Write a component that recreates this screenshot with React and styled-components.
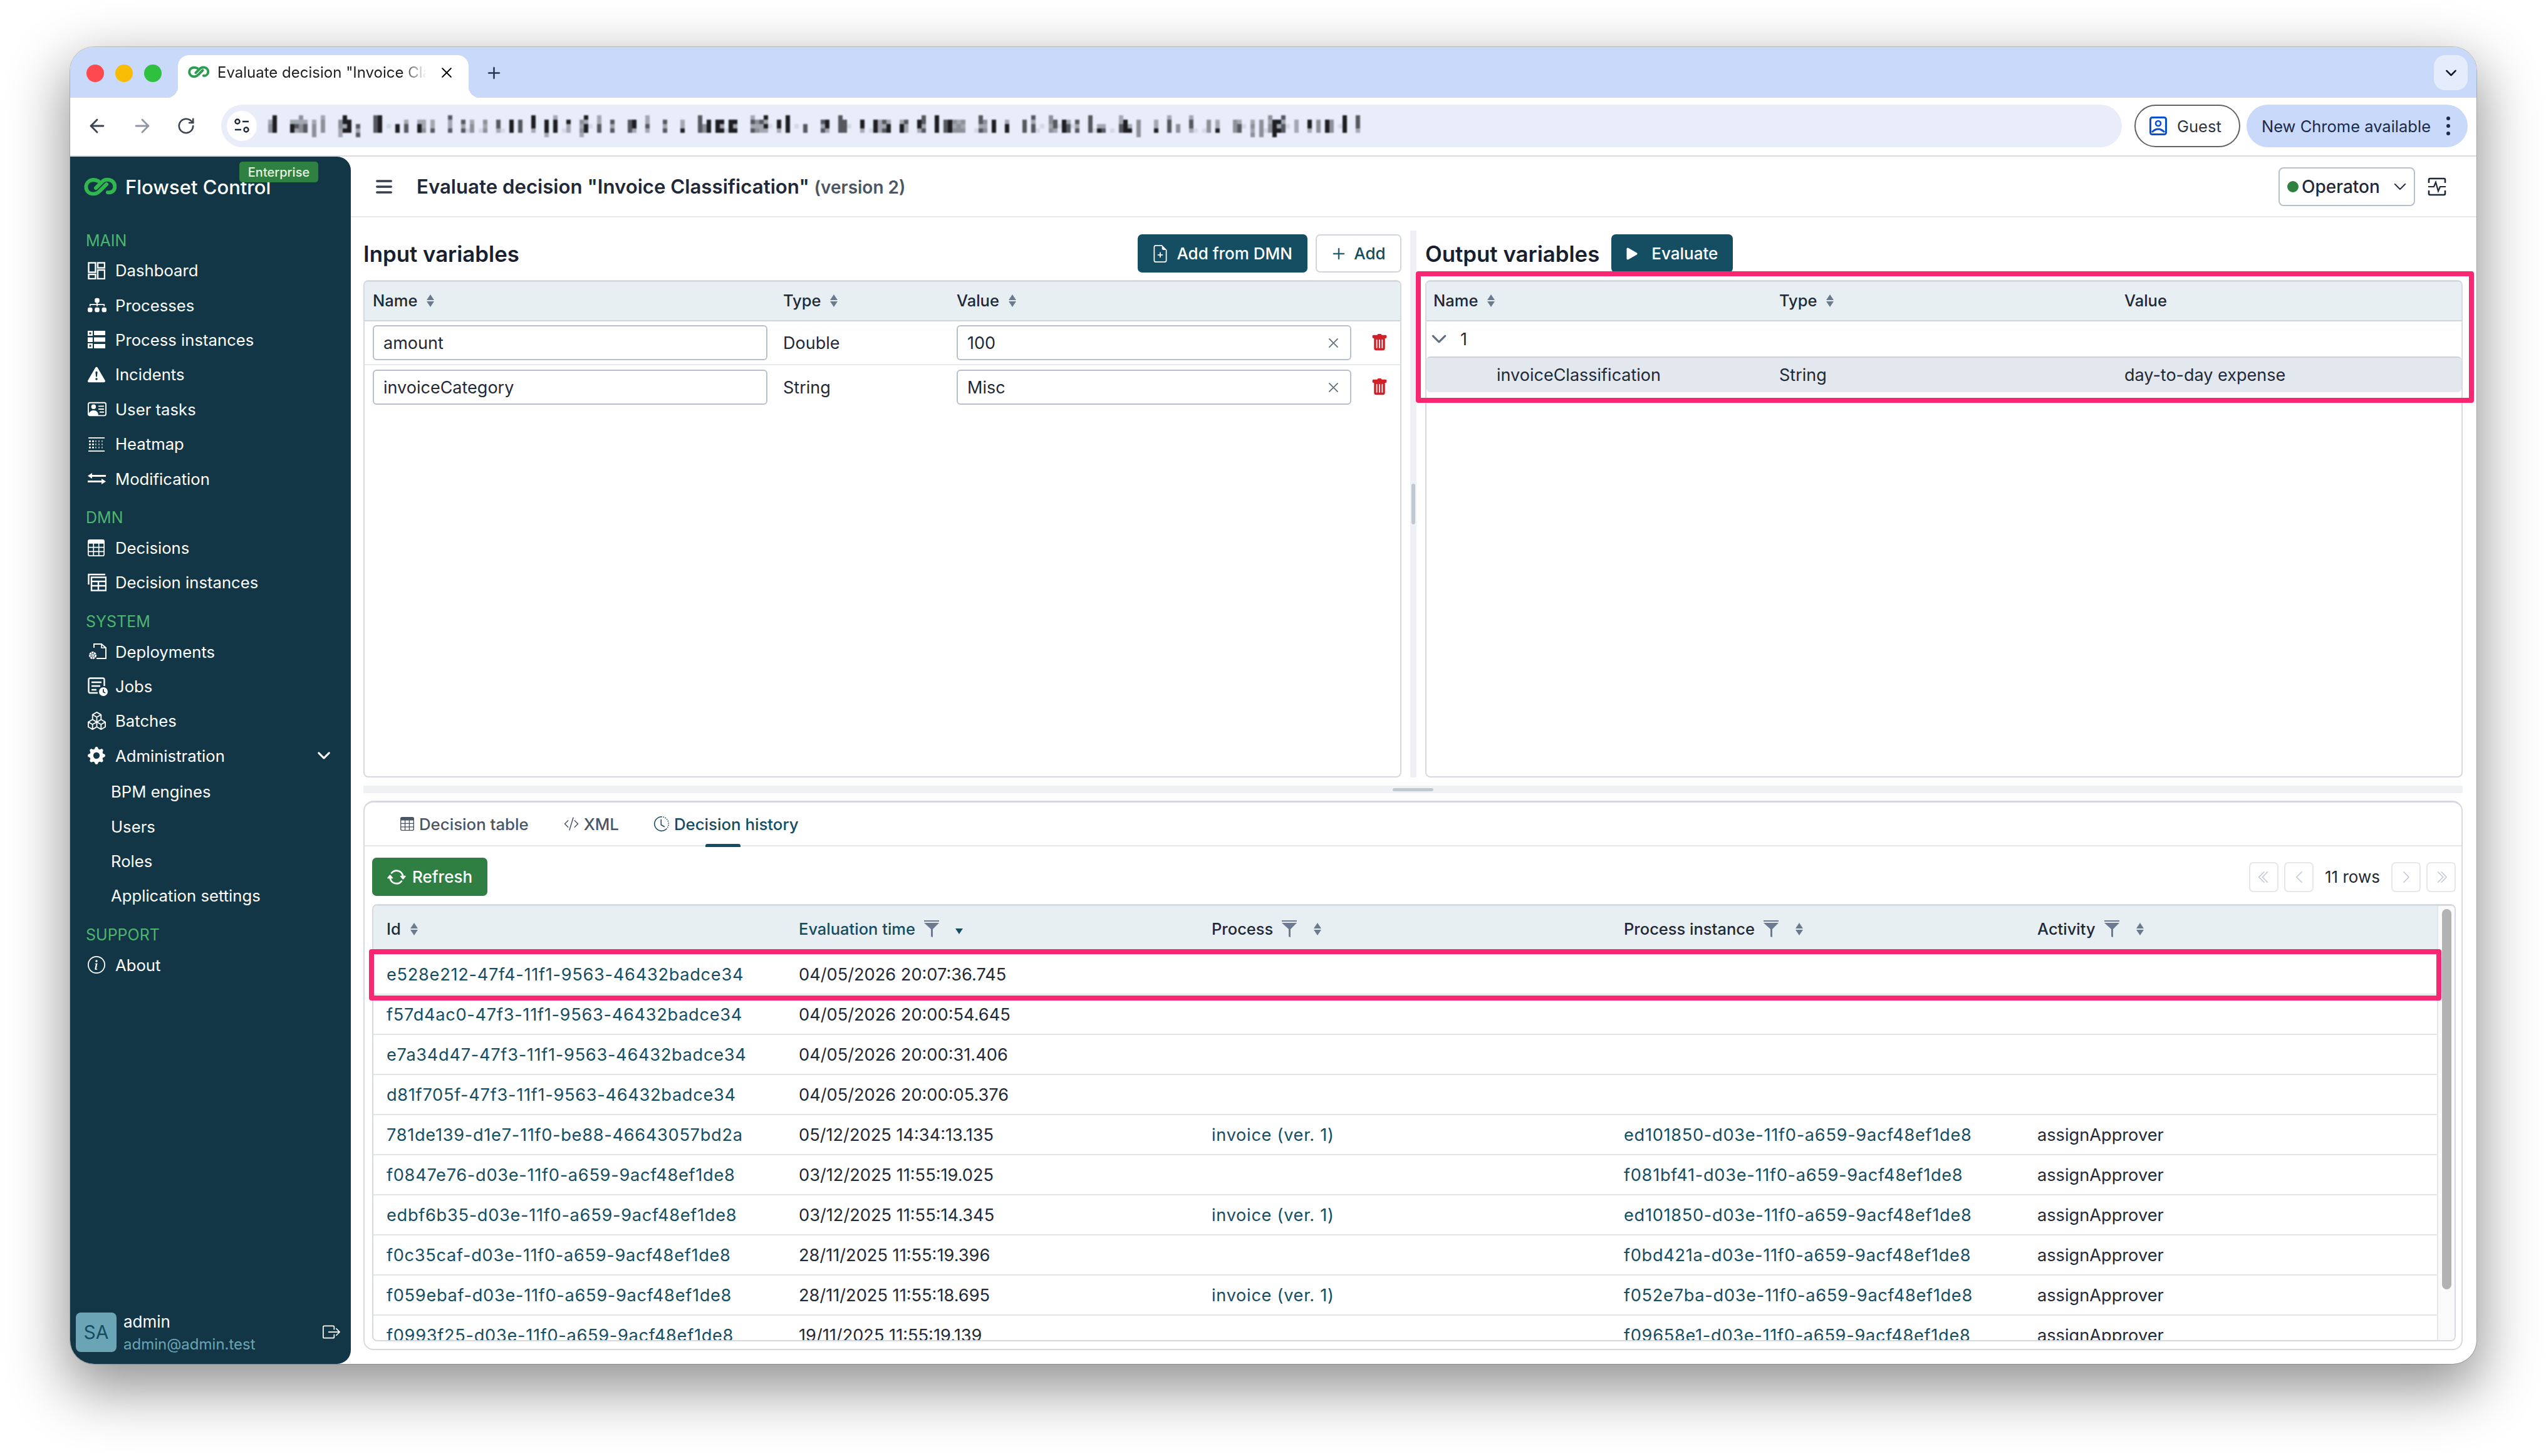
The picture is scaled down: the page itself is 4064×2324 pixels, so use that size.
import React, { useMemo } from 'react';
import styled, { createGlobalStyle } from 'styled-components';
import { ArrowLeft, ArrowRight, RotateCw } from 'lucide-react';
import {
  BsArrowRepeat,
  BsBoxArrowRight,
  BsBoxes,
  BsChevronDoubleLeft,
  BsChevronDoubleRight,
  BsChevronDown,
  BsChevronLeft,
  BsChevronRight,
  BsClockHistory,
  BsCodeSlash,
  BsDiagram3Fill,
  BsExclamationTriangleFill,
  BsFileEarmarkPlus,
  BsGearFill,
  BsInfoCircle,
  BsList,
  BsPersonVcard,
  BsPlayFill,
  BsPlusLg,
  BsTable,
  BsTrashFill,
  BsXLg,
} from 'react-icons/bs';

const GlobalStyle = createGlobalStyle`
  * { box-sizing: border-box; }
  html, body { margin: 0; padding: 0; background: #fff; }
  body { font-family: Inter, "Liberation Sans", sans-serif; color: #1f2937; }
`;

const TEAL = '#154d63';

const Logo = ({ size = 52, color = '#30b84f' }) => (
  <svg width={size} height={size * 0.6} viewBox="0 0 52 31" fill="none" stroke={color} strokeWidth="6" strokeLinecap="round">
    <path d="M23 6C19 4 14 3.500 10 5C4 8 2.500 14 4 19C6 25 12 27 18 26C22 25.500 24 23 26 21L36 11" />
    <path d="M19 17L28 8C31 4.500 36 3 41 4C47 5.500 50 11 49 17C48 22 43 25 38 24" />
  </svg>
);

const SortIcon = ({ color = '#6b7a8f' }) => (
  <svg width="14" height="20" viewBox="0 0 14 20" fill={color}>
    <path d="M7 0L13 9H1Z" />
    <path d="M7 20L13 11H1Z" />
  </svg>
);

const FilterIcon = () => (
  <svg width="24" height="27" viewBox="0 0 24 27" fill="#6b7a8f">
    <rect x="0" y="0" width="24" height="2" />
    <path d="M0 4H24L14 14V27L11 26V14Z" />
  </svg>
);

const DashboardIcon = () => (
  <svg width="28" height="28" viewBox="0 0 28 28" fill="none" stroke="#fff" strokeWidth="2.400">
    <rect x="1.500" y="1.500" width="11" height="15" />
    <rect x="16" y="1.500" width="11" height="8" />
    <rect x="1.500" y="20" width="11" height="7" />
    <rect x="16" y="13" width="11" height="14" />
  </svg>
);

const InstancesIcon = () => (
  <svg width="28" height="28" viewBox="0 0 28 28" fill="#fff">
    <path fillRule="evenodd" d="M0 0H8V8H0ZM2.500 2.500V5.500H5.500V2.500Z" />
    <rect x="10" y="0" width="18" height="7" />
    <path d="M0 10.500H8V18H0Z" />
    <rect x="10" y="10.500" width="18" height="7" />
    <path fillRule="evenodd" d="M0 20H8V28H0ZM2.500 22.500V25.500H5.500V22.500Z" />
    <rect x="10" y="21" width="18" height="7" />
  </svg>
);

const HeatmapIcon = () => {
  const dots = [];
  for (let row = 0; row < 3; row++) {
    for (let col = 0; col < 5; col++) {
      dots.push(<rect key={`${row}${col}`} x={2 + col * 5} y={8 + row * 5} width={col < 2 ? 3 : 2} height="2.600" opacity={col < 2 ? 1 : 0.6} />);
    }
  }
  return (
    <svg width="28" height="28" viewBox="0 0 28 28" fill="#fff">
      <rect x="1" y="3" width="26" height="1.800" />
      {dots}
      <rect x="1" y="24" width="26" height="1.800" />
    </svg>
  );
};

const ModificationIcon = () => (
  <svg width="29" height="24" viewBox="0 0 29 24" fill="#fff">
    <rect x="5" y="6" width="24" height="3" />
    <path d="M0 7.500L7 3V12Z" />
    <rect x="0" y="15" width="24" height="3" />
    <path d="M29 16.500L22 12V21Z" />
  </svg>
);

const DecisionInstancesIcon = () => (
  <svg width="30" height="30" viewBox="0 0 30 30" fill="none" stroke="#fff" strokeWidth="2.400">
    <path d="M1.500 18V2H28" />
    <rect x="6" y="6.500" width="23" height="21" />
    <path d="M6 13H29M6 20H29M17 13V27" />
  </svg>
);

const DeploymentsIcon = () => (
  <svg width="30" height="28" viewBox="0 0 30 28" fill="none" stroke="#fff" strokeWidth="2">
    <path d="M10 8V2H22L29 8V25H14" />
    <path d="M22 2V8H29" strokeWidth="1.600" />
    <circle cx="8" cy="20" r="4.500" strokeWidth="3" strokeDasharray="3 0.800" />
    <circle cx="8" cy="20" r="1.500" strokeWidth="1.500" />
  </svg>
);

const JobsIcon = () => (
  <svg width="32" height="30" viewBox="0 0 32 30" fill="none" stroke="#fff" strokeWidth="2.400">
    <path d="M16 25H4Q1.500 25 1.500 22V4Q1.500 1.500 4 1.500H24Q26.500 1.500 26.500 4V14" />
    <path d="M6 8H22M6 14H20M6 20H14" />
    <circle cx="25" cy="23" r="7" fill="#fff" stroke="none" />
    <path d="M25 19V23.500L28 25" stroke="#123645" strokeWidth="1.800" />
  </svg>
);

const SiteIcon = () => (
  <svg width="26" height="26" viewBox="0 0 26 26" fill="none" stroke="#1f2937" strokeWidth="2.400">
    <circle cx="6" cy="6" r="3.500" />
    <path d="M14 6H24M2 19H12" />
    <circle cx="20" cy="19" r="3.500" />
  </svg>
);

const GuestIcon = () => (
  <svg width="28" height="30" viewBox="0 0 28 30" fill="none">
    <rect x="1.500" y="1.500" width="25" height="27" rx="3" stroke="#0b50d0" strokeWidth="3" />
    <circle cx="14" cy="11" r="4" stroke="#0b50d0" strokeWidth="2.600" />
    <path d="M4 25Q14 15 24 25" stroke="#0b50d0" strokeWidth="3" />
  </svg>
);

const PulseBoxIcon = () => (
  <svg width="30" height="30" viewBox="0 0 30 30" fill="none" stroke="#1f2937" strokeWidth="2.600">
    <path d="M2 9V4Q2 2 4 2H26Q28 2 28 4V9" />
    <path d="M2 21V26Q2 28 4 28H26Q28 28 28 26V21" />
    <path d="M1 15H10L13 8L17 22L20 15H29" strokeWidth="2.200" />
  </svg>
);

// mosaic standing in for the pixelated address in the screenshot
const BlurredUrl = () => {
  const cells = useMemo(() => {
    const out = [];
    let seed = 4211;
    const rnd = () => {
      seed = (seed * 1103515245 + 12345) & 0x7fffffff;
      return seed / 0x7fffffff;
    };
    const cols = 249;
    let gap = 0;
    for (let c = 0; c < cols; c++) {
      if (gap > 0) {
        gap--;
        if (rnd() < 0.2) out.push({ x: c * 7, y: 14 + Math.floor(rnd() * 2) * 7, f: '#d3d9e6' });
        continue;
      }
      const kind = rnd();
      const top = kind < 0.25 ? 0 : 1;
      const bottom = kind > 0.93 ? 4 : 3;
      const shade = rnd();
      const base = shade < 0.45 ? '#1d1e22' : shade < 0.75 ? '#55585f' : '#8d9098';
      for (let r = top; r <= bottom; r++) {
        if (r === 1 && top === 1 && rnd() < 0.15) continue;
        out.push({ x: c * 7, y: r * 7, f: rnd() < 0.25 ? '#a3a7b2' : base });
      }
      if (rnd() < 0.6) gap = 1 + Math.floor(rnd() * 3);
    }
    return out;
  }, []);
  return (
    <svg width="1744" height="35" viewBox="0 0 1744 35" style={{ filter: 'blur(0.8px)' }}>
      {cells.map((k, i) => (
        <rect key={i} x={k.x} y={k.y} width="7" height="7" fill={k.f} />
      ))}
    </svg>
  );
};

const NAV = [
  {
    title: 'MAIN',
    items: [
      ['Dashboard', <DashboardIcon />],
      ['Processes', <BsDiagram3Fill size={30} />],
      ['Process instances', <InstancesIcon />],
      ['Incidents', <BsExclamationTriangleFill size={28} />],
      ['User tasks', <BsPersonVcard size={30} />],
      ['Heatmap', <HeatmapIcon />],
      ['Modification', <ModificationIcon />],
    ],
  },
  {
    title: 'DMN',
    items: [
      ['Decisions', <BsTable size={27} />],
      ['Decision instances', <DecisionInstancesIcon />],
    ],
  },
  {
    title: 'SYSTEM',
    items: [
      ['Deployments', <DeploymentsIcon />],
      ['Jobs', <JobsIcon />],
      ['Batches', <BsBoxes size={29} />],
    ],
  },
];

const ADMIN = ['BPM engines', 'Users', 'Roles', 'Application settings'];

const HISTORY = [
  ['e528e212-47f4-11f1-9563-46432badce34', '04/05/2026 20:07:36.745', '', '', ''],
  ['f57d4ac0-47f3-11f1-9563-46432badce34', '04/05/2026 20:00:54.645', '', '', ''],
  ['e7a34d47-47f3-11f1-9563-46432badce34', '04/05/2026 20:00:31.406', '', '', ''],
  ['d81f705f-47f3-11f1-9563-46432badce34', '04/05/2026 20:00:05.376', '', '', ''],
  ['781de139-d1e7-11f0-be88-46643057bd2a', '05/12/2025 14:34:13.135', 'invoice (ver. 1)', 'ed101850-d03e-11f0-a659-9acf48ef1de8', 'assignApprover'],
  ['f0847e76-d03e-11f0-a659-9acf48ef1de8', '03/12/2025 11:55:19.025', '', 'f081bf41-d03e-11f0-a659-9acf48ef1de8', 'assignApprover'],
  ['edbf6b35-d03e-11f0-a659-9acf48ef1de8', '03/12/2025 11:55:14.345', 'invoice (ver. 1)', 'ed101850-d03e-11f0-a659-9acf48ef1de8', 'assignApprover'],
  ['f0c35caf-d03e-11f0-a659-9acf48ef1de8', '28/11/2025 11:55:19.396', '', 'f0bd421a-d03e-11f0-a659-9acf48ef1de8', 'assignApprover'],
  ['f059ebaf-d03e-11f0-a659-9acf48ef1de8', '28/11/2025 11:55:18.695', 'invoice (ver. 1)', 'f052e7ba-d03e-11f0-a659-9acf48ef1de8', 'assignApprover'],
  ['f0993f25-d03e-11f0-a659-9acf48ef1de8', '19/11/2025 11:55:19.139', '', 'f09658e1-d03e-11f0-a659-9acf48ef1de8', 'assignApprover'],
];

const VariableRow = ({ name, type, value, last }) => (
  <InputRow $last={last}>
    <TextBox>{name}</TextBox>
    <span>{type}</span>
    <ValueCell>
      <ValueBox>
        {value}
        <BsXLg size={19} color="#5b6675" stroke="#5b6675" strokeWidth={0.5} />
      </ValueBox>
      <BsTrashFill size={28} color="#d0202a" />
    </ValueCell>
  </InputRow>
);

const App = () => (
  <Page>
    <GlobalStyle />
    <Window>
      <TabStrip>
        <Lights>
          <Light $color="#fe4a4f" />
          <Light $color="#f8bc05" />
          <Light $color="#2dc13f" />
        </Lights>
        <Tab>
          <Logo size={34} color="#2a9d50" />
          <TabTitle>Evaluate decision "Invoice Classification"</TabTitle>
          <BsXLg size={20} color="#111" stroke="#111" strokeWidth={0.8} />
        </Tab>
        <NewTab>
          <BsPlusLg size={25} stroke="#1f2f4a" strokeWidth={0.5} />
        </NewTab>
        <TabSearch>
          <BsChevronDown size={19} stroke="#111827" strokeWidth={1.2} />
        </TabSearch>
      </TabStrip>

      <Toolbar>
        <NavButton><ArrowLeft size={34} strokeWidth={2} /></NavButton>
        <NavButton $off><ArrowRight size={34} strokeWidth={2} /></NavButton>
        <NavButton><RotateCw size={30} strokeWidth={2} /></NavButton>
        <Omnibox>
          <SiteButton><SiteIcon /></SiteButton>
          <BlurredUrl />
        </Omnibox>
        <GuestButton>
          <GuestIcon />
          Guest
        </GuestButton>
        <UpdateButton>
          New Chrome available
          <Kebab>
            <i /><i /><i />
          </Kebab>
        </UpdateButton>
      </Toolbar>

      <AppBody>
        <Sidebar>
          <Brand>
            <Logo />
            <BrandName>Flowset Control</BrandName>
            <EnterpriseBadge>Enterprise</EnterpriseBadge>
          </Brand>
          {NAV.map((section, index) => (
            <React.Fragment key={section.title}>
              <SectionLabel $first={index === 0}>{section.title}</SectionLabel>
              {section.items.map(([label, icon]) => (
                <NavItem key={label}>
                  <NavIcon>{icon}</NavIcon>
                  {label}
                </NavItem>
              ))}
            </React.Fragment>
          ))}
          <NavItem>
            <NavIcon><BsGearFill size={28} /></NavIcon>
            Administration
            <NavCaret><BsChevronDown size={22} stroke="#fff" strokeWidth={1.2} /></NavCaret>
          </NavItem>
          <SubNav>
            {ADMIN.map((label) => (
              <SubItem key={label}>{label}</SubItem>
            ))}
          </SubNav>
          <SectionLabel>SUPPORT</SectionLabel>
          <NavItem>
            <NavIcon><BsInfoCircle size={28} /></NavIcon>
            About
          </NavItem>
          <UserFooter>
            <Avatar>SA</Avatar>
            <UserText>
              <span>admin</span>
              <UserMail>admin@admin.test</UserMail>
            </UserText>
            <LogoutIcon><BsBoxArrowRight size={28} /></LogoutIcon>
          </UserFooter>
        </Sidebar>

        <Main>
          <Header>
            <BsList size={36} color="#374151" stroke="#374151" strokeWidth={0.5} />
            <PageTitle>
              Evaluate decision "Invoice Classification" <Version>(version 2)</Version>
            </PageTitle>
            <EngineSelect>
              <EngineDot />
              Operaton
              <EngineCaret><BsChevronDown size={22} stroke="#1f2937" strokeWidth={0.6} /></EngineCaret>
            </EngineSelect>
            <PulseBoxIcon />
          </Header>

          <Content>
            <TopPanes>
              <LeftPane>
                <PaneHead>
                  <PaneTitle>Input variables</PaneTitle>
                  <PaneActions>
                    <PrimaryButton>
                      <BsFileEarmarkPlus size={28} />
                      Add from DMN
                    </PrimaryButton>
                    <OutlineButton>
                      <BsPlusLg size={24} stroke={TEAL} strokeWidth={0.5} />
                      Add
                    </OutlineButton>
                  </PaneActions>
                </PaneHead>
                <DataPanel>
                  <InputHeadRow>
                    <HeadCell>Name <SortIcon /></HeadCell>
                    <HeadCell>Type <SortIcon /></HeadCell>
                    <HeadCell>Value <SortIcon /></HeadCell>
                  </InputHeadRow>
                  <VariableRow name="amount" type="Double" value="100" />
                  <VariableRow name="invoiceCategory" type="String" value="Misc" last />
                </DataPanel>
              </LeftPane>

              <VerticalSplit>
                <SplitGrip />
              </VerticalSplit>

              <RightPane>
                <PaneHead>
                  <PaneTitle>Output variables</PaneTitle>
                  <PrimaryButton $tight>
                    <BsPlayFill size={34} />
                    Evaluate
                  </PrimaryButton>
                </PaneHead>
                <OutputWrap>
                  <DataPanel>
                    <OutputHeadRow>
                      <HeadCell>Name <SortIcon /></HeadCell>
                      <HeadCell>Type <SortIcon /></HeadCell>
                      <HeadCell>Value</HeadCell>
                    </OutputHeadRow>
                    <GroupRow>
                      <BsChevronDown size={26} color="#5b6b80" stroke="#5b6b80" strokeWidth={0.8} />
                      <GroupIndex>1</GroupIndex>
                    </GroupRow>
                    <ResultRow>
                      <ResultName>invoiceClassification</ResultName>
                      <span>String</span>
                      <span>day-to-day expense</span>
                    </ResultRow>
                  </DataPanel>
                  <OutputHighlight />
                </OutputWrap>
              </RightPane>
            </TopPanes>

            <HorizontalSplit>
              <HandleBar />
            </HorizontalSplit>

            <BottomPanel>
              <TabBar>
                <TabItem><BsTable size={22} /> Decision table</TabItem>
                <TabItem><BsCodeSlash size={24} /> XML</TabItem>
                <TabItem $active><BsClockHistory size={24} /> Decision history</TabItem>
              </TabBar>
              <HistoryTools>
                <RefreshButton>
                  <BsArrowRepeat size={30} stroke="#fff" strokeWidth={0.4} />
                  Refresh
                </RefreshButton>
                <Pager>
                  <PageButton><BsChevronDoubleLeft size={22} /></PageButton>
                  <PageButton><BsChevronLeft size={22} /></PageButton>
                  <RowCount>11 rows</RowCount>
                  <PageButton><BsChevronRight size={22} /></PageButton>
                  <PageButton><BsChevronDoubleRight size={22} /></PageButton>
                </Pager>
              </HistoryTools>
              <HistoryWrap>
                <HistoryFrame>
                  <HistoryScroll>
                    <HistoryHead>
                      <HeadCell>Id <SortIcon /></HeadCell>
                      <HeadCell $link>
                        Evaluation time <FilterIcon />
                        <SortDown />
                      </HeadCell>
                      <HeadCell>Process <FilterIcon /><SortGap><SortIcon /></SortGap></HeadCell>
                      <HeadCell>Process instance <FilterIcon /><SortGap><SortIcon /></SortGap></HeadCell>
                      <HeadCell>Activity <FilterIcon /><SortGap><SortIcon /></SortGap></HeadCell>
                    </HistoryHead>
                    {HISTORY.map((row) => (
                      <HistoryRow key={row[0]}>
                        <LinkCell>{row[0]}</LinkCell>
                        <span>{row[1]}</span>
                        <LinkCell>{row[2]}</LinkCell>
                        <LinkCell>{row[3]}</LinkCell>
                        <span>{row[4]}</span>
                      </HistoryRow>
                    ))}
                  </HistoryScroll>
                  <ScrollTrack>
                    <ScrollThumb />
                  </ScrollTrack>
                </HistoryFrame>
                <RowHighlight />
              </HistoryWrap>
            </BottomPanel>
          </Content>
        </Main>
      </AppBody>
    </Window>
  </Page>
);

export default App;

const Page = styled.div`
  width: 4064px;
  height: 2324px;
  padding: 75px 0 0 112px;
  overflow: hidden;
  background: #fff;
`;

const Window = styled.div`
  width: 3841px;
  height: 2102px;
  border-radius: 38px;
  overflow: hidden;
  display: flex;
  flex-direction: column;
  background: #fff;
  box-shadow: 0 34px 90px 8px rgba(0, 0, 0, 0.42), 0 0 0 1px rgba(0, 0, 0, 0.18);
`;

const TabStrip = styled.div`
  height: 81px;
  flex: none;
  background: #c9d9fa;
  display: flex;
  align-items: flex-start;
  padding: 13px 14px 0 26px;
`;

const Lights = styled.div`
  display: flex;
  gap: 18px;
  margin-top: 15px;
  width: 146px;
`;

const Light = styled.span`
  width: 28px;
  height: 28px;
  border-radius: 50%;
  background: ${(p) => p.$color};
`;

const Tab = styled.div`
  position: relative;
  width: 464px;
  height: 68px;
  background: #fff;
  border-radius: 18px 18px 0 0;
  display: flex;
  align-items: center;
  padding: 0 24px 13px 16px;
  font-size: 24px;
  color: #1f1f1f;

  &::before,
  &::after {
    content: '';
    position: absolute;
    bottom: 0;
    width: 18px;
    height: 18px;
  }
  &::before {
    left: -18px;
    background: radial-gradient(circle at 0 0, transparent 18px, #fff 18.5px);
  }
  &::after {
    right: -18px;
    background: radial-gradient(circle at 100% 0, transparent 18px, #fff 18.5px);
  }
`;

const TabTitle = styled.span`
  width: 334px;
  margin: 0 22px 0 13px;
  flex: none;
  white-space: nowrap;
  overflow: hidden;
  -webkit-mask-image: linear-gradient(90deg, #000 88%, transparent);
`;

const NewTab = styled.div`
  margin: 16px 0 0 28px;
  color: #1f2f4a;
  display: flex;
`;

const TabSearch = styled.div`
  margin-left: auto;
  width: 54px;
  height: 56px;
  border-radius: 18px;
  background: #e5ecfb;
  display: flex;
  align-items: center;
  justify-content: center;
  color: #111827;
`;

const Toolbar = styled.div`
  height: 94px;
  flex: none;
  background: #fff;
  border-bottom: 2px solid #dadada;
  display: flex;
  align-items: center;
  padding: 0 14px 2px 26px;
`;

const NavButton = styled.div`
  width: 72px;
  display: flex;
  color: ${(p) => (p.$off ? '#8f96a3' : '#3c4350')};
`;

const Omnibox = styled.div`
  height: 68px;
  width: 3034px;
  margin-left: -1px;
  border-radius: 34px;
  background: #e8edf9;
  display: flex;
  align-items: center;
  padding: 0 0 0 9px;
`;

const SiteButton = styled.div`
  width: 48px;
  height: 48px;
  border-radius: 50%;
  background: #fff;
  display: flex;
  align-items: center;
  justify-content: center;
  margin-right: 18px;
  flex: none;
`;

const GuestButton = styled.div`
  width: 169px;
  height: 68px;
  margin-left: 20px;
  border: 2px solid #5f6368;
  border-radius: 34px;
  display: flex;
  align-items: center;
  gap: 16px;
  padding-left: 22px;
  font-size: 25.5px;
  color: #303540;
`;

const UpdateButton = styled.div`
  width: 353px;
  height: 68px;
  margin-left: 10px;
  border-radius: 34px;
  background: #c9d9fa;
  display: flex;
  align-items: center;
  justify-content: space-between;
  padding: 0 28px 0 24px;
  font-size: 25.5px;
  color: #1b2a49;
  white-space: nowrap;
`;

const Kebab = styled.span`
  display: flex;
  flex-direction: column;
  gap: 6px;
  i {
    width: 6px;
    height: 6px;
    border-radius: 50%;
    background: #1b2a49;
  }
`;

const AppBody = styled.div`
  flex: 1;
  min-height: 0;
  display: flex;
`;

const Sidebar = styled.aside`
  width: 448px;
  flex: none;
  background: #123645;
  border-radius: 0 22px 22px 0;
  display: flex;
  flex-direction: column;
  color: #fff;
  padding-left: 25px;
`;

const Brand = styled.div`
  position: relative;
  height: 113px;
  flex: none;
  display: flex;
  align-items: flex-start;
  gap: 14px;
  margin-left: -3px;
  padding-top: 33px;
`;

const BrandName = styled.span`
  font-size: 31px;
  font-weight: 500;
  line-height: 32px;
  white-space: nowrap;
`;

const EnterpriseBadge = styled.span`
  position: absolute;
  left: 248px;
  top: 8px;
  width: 126px;
  height: 33px;
  border-radius: 5px;
  background: #2f8142;
  display: flex;
  align-items: center;
  justify-content: center;
  font-size: 20px;
  font-weight: 500;
  color: #e4f5e4;
`;

const SectionLabel = styled.div`
  height: 41px;
  flex: none;
  display: flex;
  align-items: center;
  font-size: 25px;
  font-weight: 400;
  color: #4db56f;
  margin-top: ${(p) => (p.$first ? '0' : '14px')};
`;

const NavItem = styled.div`
  height: 55.4px;
  flex: none;
  display: flex;
  align-items: center;
  font-size: 25.7px;
  white-space: nowrap;
`;

const NavIcon = styled.span`
  width: 44px;
  margin-left: 3px;
  display: flex;
  align-items: center;
`;

const NavCaret = styled.span`
  margin-left: auto;
  margin-right: 32px;
  display: flex;
`;

const SubNav = styled.div`
  margin-top: 2px;
  padding-left: 40px;
  display: flex;
  flex-direction: column;
`;

const SubItem = styled.div`
  height: 55.4px;
  display: flex;
  align-items: center;
  font-size: 25.7px;
`;

const UserFooter = styled.div`
  margin-top: auto;
  margin-left: -16px;
  padding: 0 0 13px 0;
  display: flex;
  align-items: center;
  color: #fff;
`;

const Avatar = styled.div`
  width: 65px;
  height: 63px;
  border-radius: 8px;
  background: #6ba5b5;
  color: #154d63;
  font-size: 30px;
  display: flex;
  align-items: center;
  justify-content: center;
`;

const UserText = styled.div`
  margin-left: 11px;
  padding-top: 4px;
  display: flex;
  flex-direction: column;
  font-size: 26px;
  line-height: 36px;
`;

const UserMail = styled.span`
  font-size: 24px;
  color: #6ba5b5;
`;

const LogoutIcon = styled.span`
  margin-left: auto;
  margin-right: 17px;
  display: flex;
`;

const Main = styled.main`
  flex: 1;
  min-width: 0;
  display: flex;
  flex-direction: column;
`;

const Header = styled.header`
  height: 97px;
  flex: none;
  border-bottom: 2px solid #e5e9ee;
  display: flex;
  align-items: center;
  padding: 0 48px 0 35px;
`;

const PageTitle = styled.div`
  margin-left: 34px;
  font-size: 31.2px;
  font-weight: 600;
  color: #1f2937;
  white-space: nowrap;
`;

const Version = styled.span`
  font-size: 28px;
  color: #4b5563;
`;

const EngineSelect = styled.div`
  margin-left: auto;
  width: 218px;
  height: 62px;
  margin-right: 20px;
  border: 2px solid #b8bfcc;
  border-radius: 8px;
  display: flex;
  align-items: center;
  padding-left: 12px;
  font-size: 28px;
  font-weight: 500;
  color: #1f2937;
`;

const EngineDot = styled.span`
  width: 18px;
  height: 18px;
  border-radius: 50%;
  background: #2f8142;
  margin-right: 5px;
`;

const EngineCaret = styled.span`
  margin-left: auto;
  margin-right: 11px;
  display: flex;
`;

const Content = styled.div`
  flex: 1;
  min-height: 0;
  padding: 0 22px 22px 20px;
  display: flex;
  flex-direction: column;
`;

const TopPanes = styled.div`
  height: 894px;
  flex: none;
  padding-top: 21px;
  display: flex;
`;

const LeftPane = styled.section`
  width: 1657px;
  flex: none;
  display: flex;
  flex-direction: column;
  padding-top: 6px;
`;

const RightPane = styled.section`
  flex: 1;
  min-width: 0;
  display: flex;
  flex-direction: column;
  padding-top: 6px;
`;

const VerticalSplit = styled.div`
  width: 10px;
  margin: 0 14px;
  background: #f0f1f5;
  position: relative;
  flex: none;
`;

const SplitGrip = styled.span`
  position: absolute;
  left: 2px;
  top: 404px;
  width: 6px;
  height: 65px;
  border-radius: 3px;
  background: #c2c8d0;
`;

const PaneHead = styled.div`
  height: 61px;
  flex: none;
  margin-bottom: 12px;
  display: flex;
  align-items: center;
`;

const PaneTitle = styled.h2`
  margin: 0;
  font-size: 34.8px;
  font-weight: 600;
  color: #17202e;
  margin-right: 19px;
`;

const PaneActions = styled.div`
  margin-left: auto;
  display: flex;
  gap: 13px;
`;

const PrimaryButton = styled.div`
  height: 61px;
  padding: 0 24px 0 ${(p) => (p.$tight ? '16px' : '22px')};
  background: ${TEAL};
  color: #fff;
  border-radius: 7px;
  display: flex;
  align-items: center;
  gap: ${(p) => (p.$tight ? '14px' : '12px')};
  font-size: 26px;
  font-weight: 500;
  white-space: nowrap;
`;

const OutlineButton = styled.div`
  height: 61px;
  width: 137px;
  border: 2px solid #d1d6dd;
  border-radius: 7px;
  display: flex;
  align-items: center;
  justify-content: center;
  gap: 12px;
  color: ${TEAL};
  font-size: 26px;
  font-weight: 500;
`;

const DataPanel = styled.div`
  flex: 1;
  min-height: 0;
  border: 2px solid #d6dae0;
  border-top-width: 3px;
  border-radius: 8px;
  overflow: hidden;
  font-size: 27px;
  color: #1f2937;
`;

const InputHeadRow = styled.div`
  height: 63px;
  background: #e8eff3;
  border-bottom: 2px solid #d1d6dc;
  display: grid;
  grid-template-columns: 655px 277px 1fr;
  align-items: center;
  padding: 0 0 2px 13px;
`;

const HeadCell = styled.div`
  display: flex;
  align-items: center;
  gap: 14px;
  font-size: 25.5px;
  font-weight: 500;
  white-space: nowrap;
  color: ${(p) => (p.$link ? TEAL : '#1f2937')};
`;

const InputRow = styled.div`
  height: 70px;
  display: grid;
  grid-template-columns: 655px 277px 1fr;
  align-items: center;
  padding-left: 13px;
  border-bottom: ${(p) => (p.$last ? 'none' : '2px solid #e5e9ee')};
`;

const TextBox = styled.div`
  width: 630px;
  height: 56px;
  border: 2px solid #b8bfcc;
  border-radius: 6px;
  padding-left: 15px;
  display: flex;
  align-items: center;
`;

const ValueCell = styled.div`
  display: flex;
  align-items: center;
  gap: 31px;
`;

const ValueBox = styled(TextBox)`
  justify-content: space-between;
  padding-right: 17px;
`;

const OutputWrap = styled.div`
  position: relative;
  flex: 1;
  min-height: 0;
  display: flex;
`;

const OutputHeadRow = styled.div`
  height: 63px;
  background: #e8eff3;
  border-bottom: 2px solid #d1d6dc;
  display: grid;
  grid-template-columns: 552px 551px 1fr;
  align-items: center;
  padding: 0 0 2px 11px;
`;

const GroupRow = styled.div`
  height: 56px;
  display: flex;
  align-items: center;
  padding-left: 7px;
`;

const GroupIndex = styled.span`
  margin-left: 21px;
`;

const ResultRow = styled.div`
  height: 57px;
  background: #e2e8ed;
  border-top: 2px solid #ccd2d9;
  border-radius: 6px;
  display: grid;
  grid-template-columns: 563px 551px 1fr;
  align-items: center;
`;

const ResultName = styled.span`
  padding-left: 112px;
`;

const OutputHighlight = styled.div`
  position: absolute;
  left: -15px;
  top: -14px;
  right: -18px;
  height: 210px;
  border: 8px solid #f92672;
  border-radius: 4px;
  pointer-events: none;
`;

const HorizontalSplit = styled.div`
  height: 12px;
  flex: none;
  margin-top: 13px;
  background: #f0f1f5;
  display: flex;
  align-items: center;
  justify-content: center;
`;

const HandleBar = styled.span`
  width: 65px;
  height: 5px;
  border-radius: 3px;
  background: #c2c8d0;
`;

const BottomPanel = styled.section`
  flex: 1;
  min-height: 0;
  margin-top: 12px;
  border: 2px solid #d6dae0;
  border-top-width: 3px;
  border-radius: 16px;
  display: flex;
  flex-direction: column;
  padding-bottom: 12px;
`;

const TabBar = styled.div`
  height: 70px;
  flex: none;
  border-bottom: 2px solid #e4e8ec;
  display: flex;
  align-items: center;
  gap: 56px;
  padding-left: 57px;
`;

const TabItem = styled.div`
  position: relative;
  height: 100%;
  display: flex;
  align-items: center;
  gap: 8px;
  font-size: 25.8px;
  font-weight: 500;
  color: ${(p) => (p.$active ? TEAL : '#4b5563')};

  ${(p) =>
    p.$active &&
    `&::after {
      content: '';
      position: absolute;
      left: 82px;
      bottom: -3px;
      width: 56px;
      height: 5px;
      border-radius: 3px 3px 0 0;
      background: ${TEAL};
    }`}
`;

const HistoryTools = styled.div`
  height: 92px;
  flex: none;
  display: flex;
  align-items: center;
  justify-content: space-between;
  padding: 5px 9px 0 12px;
`;

const RefreshButton = styled.div`
  width: 184px;
  height: 61px;
  border-radius: 7px;
  background: #2f7f42;
  color: #fff;
  display: flex;
  align-items: center;
  justify-content: center;
  gap: 10px;
  font-size: 26px;
  font-weight: 500;
`;

const Pager = styled.div`
  display: flex;
  align-items: center;
  gap: 9px;
`;

const PageButton = styled.div`
  width: 47px;
  height: 48px;
  border: 2px solid #e5e7eb;
  border-radius: 7px;
  display: flex;
  align-items: center;
  justify-content: center;
  color: #bcc3d0;
`;

const RowCount = styled.span`
  margin: 0 9px;
  font-size: 26px;
  color: #1f2937;
`;

const HistoryWrap = styled.div`
  position: relative;
  flex: 1;
  min-height: 0;
  margin: 0 9px 0 12px;
  display: flex;
`;

const HistoryFrame = styled.div`
  flex: 1;
  min-width: 0;
  border: 2px solid #d6dae0;
  border-top-width: 3px;
  border-radius: 8px;
  overflow: hidden;
  display: flex;
`;

const HistoryScroll = styled.div`
  flex: 1;
  min-width: 0;
  overflow: hidden;
  font-size: 27.2px;
  color: #1f2937;
`;

const HistoryHead = styled.div`
  height: 78px;
  background: #e8eff3;
  display: grid;
  grid-template-columns: 658px 659px 658px 660px 1fr;
  align-items: center;
  padding: 0 0 5px 21px;
`;

const HistoryRow = styled.div`
  height: 64px;
  border-bottom: 2px solid #e3e7eb;
  display: grid;
  grid-template-columns: 658px 659px 658px 660px 1fr;
  align-items: center;
  padding-left: 21px;
  white-space: nowrap;
`;

const LinkCell = styled.span`
  color: ${TEAL};
  letter-spacing: 0.7px;
`;

const SortDown = styled.span`
  width: 0;
  height: 0;
  margin: 8px 0 0 12px;
  border-left: 6px solid transparent;
  border-right: 6px solid transparent;
  border-top: 9px solid ${TEAL};
`;

const SortGap = styled.span`
  display: flex;
  margin-left: 12px;
`;

const ScrollTrack = styled.div`
  width: 28px;
  flex: none;
  background: #fafafa;
  border-left: 2px solid #e5e7eb;
  padding: 5px 5px 0 6px;
`;

const ScrollThumb = styled.div`
  height: 607px;
  border-radius: 8px;
  background: #b2b2b2;
`;

const RowHighlight = styled.div`
  position: absolute;
  left: -5px;
  top: 72px;
  width: 3308px;
  height: 82px;
  border: 8px solid #f92672;
  border-radius: 4px;
  pointer-events: none;
`;
